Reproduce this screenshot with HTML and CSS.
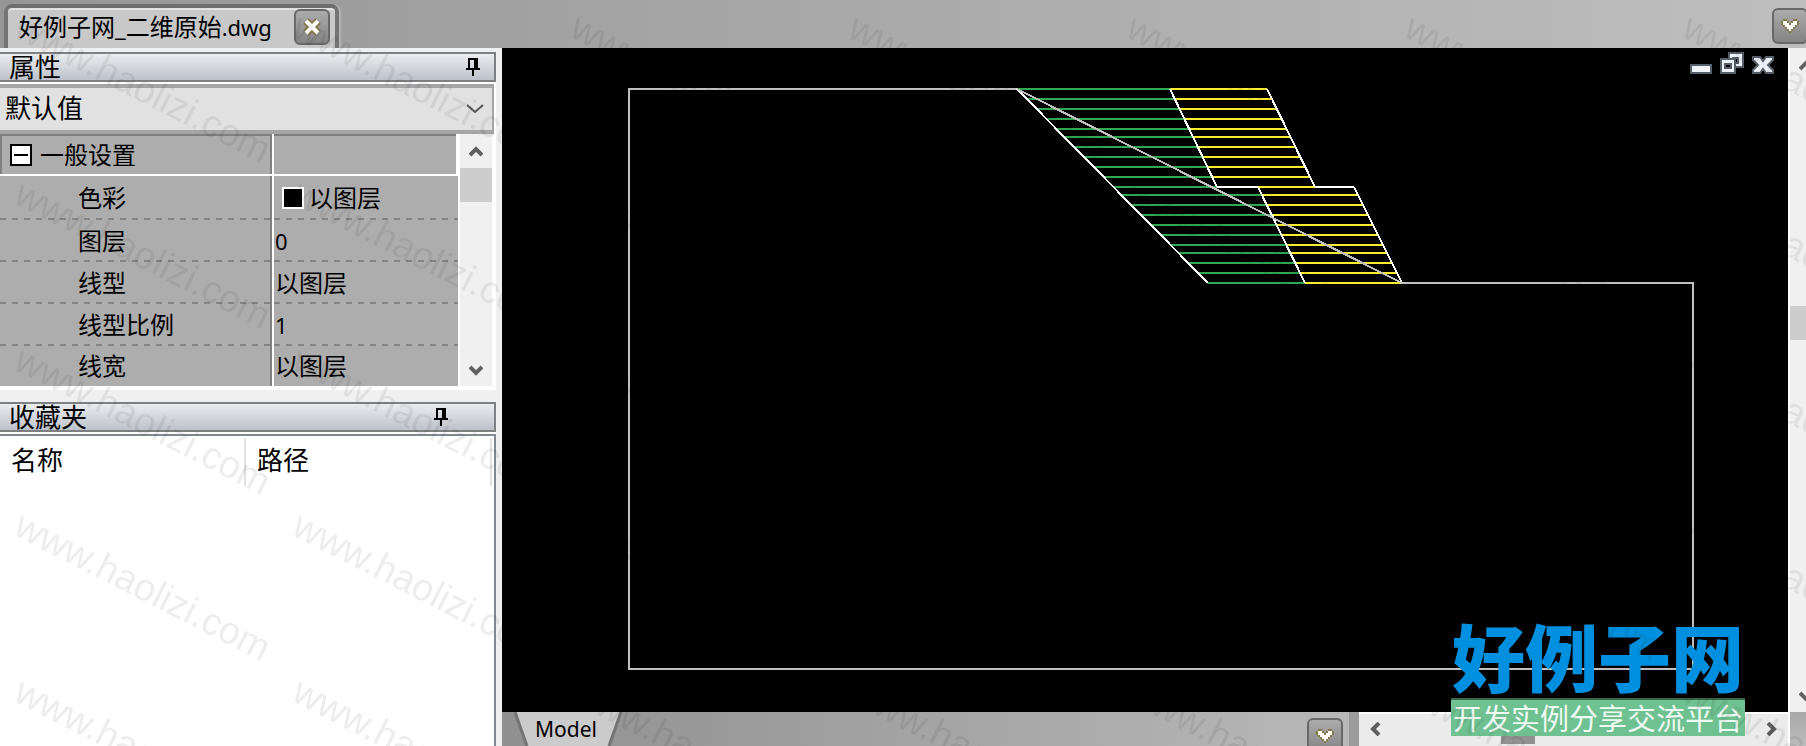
FILE: index.html
```html
<!DOCTYPE html>
<html lang="zh-CN">
<head>
<meta charset="utf-8">
<title>好例子网_二维原始.dwg</title>
<link rel="stylesheet" href="styles.css">
</head>
<body>
<div class="app">
  <header class="tabbar">
    <div class="tab">
      <span class="tab-title">好例子网_二维原始<span class="latin">.dwg</span></span>
      <button class="btn" type="button" aria-label="关闭">
        <svg width="20" height="18" viewBox="0 0 20 18"><path d="M4 3l12 12M16 3L4 15" stroke="#85794a" stroke-width="8"/><path d="M4 3l12 12M16 3L4 15" stroke="#fff" stroke-width="4"/></svg>
      </button>
    </div>
    <button class="btn btn-edge" type="button" aria-label="标签列表">
      <svg width="20" height="16" viewBox="0 0 20 16"><path d="M1 3h2V1h4v2h2v2h2V3h2V1h4v2h2v4h-2v2h-2v2h-2v2h-2v2H9v-2H7v-2H5V9H3V7H1z" fill="#85794a"/><path d="M3 3h4v2h2v2h2V5h2V3h4v4h-2v2h-2v2h-2v2H9v-2H7V9H5V7H3z" fill="#fff"/></svg>
    </button>
  </header>

  <aside class="side">
    <section class="panel">
      <h2 class="panel-head">属性
        <button class="pin" type="button" aria-label="固定属性面板"><svg width="14" height="18" viewBox="0 0 14 18"><path d="M2 0h10v10h2v2H8v6H6v-6H0v-2h2zM4 2v8h4V2z" fill="#000" fill-rule="evenodd"/></svg></button>
      </h2>
      <div class="combo">
        <select class="combo-select" aria-label="选择对象"><option>默认值</option></select>
        <svg class="combo-arrow" width="18" height="12" viewBox="0 0 18 12"><path d="M1 2l8 7 8-7" fill="none" stroke="#555" stroke-width="2"/></svg>
      </div>
      <div class="props">
        <table class="grid">
          <thead>
            <tr><th class="group" scope="col"><div class="group-label"><button class="fold" type="button" aria-label="折叠"></button>一般设置</div></th><td></td></tr>
          </thead>
          <tbody>
            <tr><th scope="row">色彩</th><td><div class="color"><span class="swatch"></span>以图层</div></td></tr>
            <tr><th scope="row">图层</th><td class="latin">0</td></tr>
            <tr><th scope="row">线型</th><td>以图层</td></tr>
            <tr><th scope="row">线型比例</th><td class="latin">1</td></tr>
            <tr><th scope="row">线宽</th><td>以图层</td></tr>
          </tbody>
        </table>
        <div class="vscroll">
          <button class="arrow" type="button" aria-label="向上"><svg width="14" height="12" viewBox="0 0 14 12"><path d="M1 10l6-6 6 6" fill="none" stroke="#606060" stroke-width="4"/></svg></button>
          <div class="thumb"></div>
          <button class="arrow arrow-end" type="button" aria-label="向下"><svg width="14" height="12" viewBox="0 0 14 12"><path d="M1 2l6 6 6-6" fill="none" stroke="#606060" stroke-width="4"/></svg></button>
        </div>
      </div>
    </section>
    <section class="panel panel-fill">
      <h2 class="panel-head panel-head-wide">收藏夹
        <button class="pin" type="button" aria-label="固定收藏夹面板"><svg width="14" height="18" viewBox="0 0 14 18"><path d="M2 0h10v10h2v2H8v6H6v-6H0v-2h2zM4 2v8h4V2z" fill="#000" fill-rule="evenodd"/></svg></button>
      </h2>
      <div class="list">
        <table class="list-table"><thead><tr><th scope="col">名称</th><th scope="col">路径</th></tr></thead></table>
      </div>
    </section>
  </aside>

  <main class="drawing">
    <svg class="model" viewBox="502 48 1286 664" role="img" aria-label="二维图形">
      <defs>
        <path id="rows" d="M1000 89h420M1000 99h420M1000 109h420M1000 119h420M1000 129h420M1000 137h420M1000 147h420M1000 157h420M1000 167h420M1000 177h420M1000 187h420M1000 195h420M1000 205h420M1000 215h420M1000 225h420M1000 235h420M1000 245h420M1000 253h420M1000 263h420M1000 273h420M1000 283h420" stroke-width="2"/>
        <clipPath id="left"><path d="M1017 88H1170L1217 186H1258L1305 284H1208z"/></clipPath>
        <clipPath id="right"><path d="M1170 88H1267L1315 188H1217zM1258 186H1354L1402 284H1305z"/></clipPath>
      </defs>
      <g shape-rendering="crispEdges" fill="none" stroke-width="2">
        <path d="M1017 89H629V669H1693V283H1402" stroke="#c0c0c0"/>
        <g clip-path="url(#left)"><use href="#rows" stroke="#2fa84f"/></g>
        <g clip-path="url(#right)"><use href="#rows" stroke="#fbec32"/></g>
        <path d="M1217 187H1258M1315 187H1354" stroke="#fff"/>
        <path d="M1017 89L1208 283M1170 89L1217 187M1267 89L1315 187M1258 187L1305 283M1354 187L1402 283" stroke="#fff"/>
        <path d="M1017 89L1402 283" stroke="#c0c0c0"/>
      </g>
    </svg>
    <div class="winctl">
      <button type="button" aria-label="最小化"><svg width="22" height="22" viewBox="0 0 22 22"><path d="M1 13h20v8H1z" fill="#f0f4f8" stroke="#56606a" stroke-width="2"/></svg></button>
      <button type="button" aria-label="还原"><svg width="24" height="22" viewBox="0 0 24 22"><path d="M9 1h14v14h-8v-4h3V6h-5v3H9z" fill="#eef3f9" stroke="#56606a" stroke-width="2"/><path d="M1 7h14v14H1z" fill="#eef3f9" stroke="#56606a" stroke-width="2"/><path d="M5 12h6v4H5z" fill="#000" stroke="#56606a" stroke-width="2"/></svg></button>
      <button type="button" aria-label="关闭图形"><svg width="22" height="18" viewBox="0 0 22 18"><path d="M1 1h7l3 4 3-4h7v3l-5 5 5 5v3h-7l-3-4-3 4H1v-3l5-5-5-5z" fill="#eef3f9" stroke="#56606a" stroke-width="2"/></svg></button>
    </div>
  </main>

  <div class="vscroll vscroll-main">
    <button class="arrow" type="button" aria-label="向上滚动"><svg width="14" height="12" viewBox="0 0 14 12"><path d="M1 10l6-6 6 6" fill="none" stroke="#606060" stroke-width="4"/></svg></button>
    <div class="thumb"></div>
    <button class="arrow arrow-end" type="button" aria-label="向下滚动"><svg width="14" height="12" viewBox="0 0 14 12"><path d="M1 2l6 6 6-6" fill="none" stroke="#606060" stroke-width="4"/></svg></button>
  </div>

  <footer class="bottom">
    <div class="layouts">
      <button class="layout-tab" type="button">
        <svg class="layout-shape" width="108" height="34" viewBox="0 0 108 34"><path d="M1 0L13 34H95L107 0z" fill="#cbcbcb"/><path d="M1 0L13 34M95 34L107 0" stroke="#747474" stroke-width="3"/></svg>
        <span class="layout-name">Model</span>
      </button>
      <button class="btn btn-low" type="button" aria-label="布局列表">
        <svg width="20" height="16" viewBox="0 0 20 16"><path d="M1 3h2V1h4v2h2v2h2V3h2V1h4v2h2v4h-2v2h-2v2h-2v2h-2v2H9v-2H7v-2H5V9H3V7H1z" fill="#85794a"/><path d="M3 3h4v2h2v2h2V5h2V3h4v4h-2v2h-2v2h-2v2H9v-2H7V9H5V7H3z" fill="#fff"/></svg>
      </button>
    </div>
    <div class="hscroll">
      <button class="harrow" type="button" aria-label="向左滚动"><svg width="12" height="14" viewBox="0 0 12 14"><path d="M10 1L4 7l6 6" fill="none" stroke="#606060" stroke-width="4"/></svg></button>
      <div class="htrack"><div class="hthumb"></div></div>
      <button class="harrow" type="button" aria-label="向右滚动"><svg width="12" height="14" viewBox="0 0 12 14"><path d="M2 1l6 6-6 6" fill="none" stroke="#606060" stroke-width="4"/></svg></button>
    </div>
    <div class="corner"></div>
  </footer>
</div>

<div class="brand">
  <div class="brand-name">好例子网</div>
  <div class="brand-line">开发实例分享交流平台</div>
</div>
<svg class="watermark" aria-hidden="true">
  <defs><pattern id="mark" x="8" y="8" width="278" height="166" patternUnits="userSpaceOnUse"><text class="mark-text" transform="translate(4 28) rotate(27)">www.haolizi.com</text></pattern></defs>
  <rect width="100%" height="100%" fill="url(#mark)"/>
</svg>
</body>
</html>
```
FILE: styles.css
```css
* { box-sizing: border-box; }

body {
  margin: 0;
  overflow: hidden;
  background: #f0f0f0;
  color: #000;
  font-family: "Noto Sans", "Noto Sans CJK SC", sans-serif;
  font-size: 24px;
  line-height: 32px;
}

button, select { margin: 0; padding: 0; border: 0; background: none; color: inherit; font: inherit; }
svg { display: block; flex: none; }
.latin { font-size: 22px; }

.app {
  display: grid;
  grid-template: 48px minmax(0, 1fr) 34px / 502px minmax(0, 1fr) 18px;
  height: 100vh;
}

/* document tabs */
.tabbar {
  grid-column: 1 / -1;
  display: flex;
  align-items: flex-end;
  justify-content: space-between;
  overflow: hidden;
  background: linear-gradient(90deg, #969696, #bebebe);
}
.tab {
  display: flex;
  align-items: center;
  gap: 22px;
  height: 44px;
  margin-left: 4px;
  padding: 0 5px 2px 11px;
  border: 4px solid #747474;
  border-top-color: #6e6e6e;
  border-bottom: 0;
  border-radius: 8px 8px 0 0;
  background: #c8c8c8;
  box-shadow: inset 0 2px #e2e2e2, 2px 0 #b4b4b4;
}
.tab-title { white-space: nowrap; }
.btn {
  display: flex;
  flex: none;
  align-items: center;
  justify-content: center;
  width: 36px;
  height: 36px;
  border: 2px solid #686868;
  border-radius: 6px;
  background: linear-gradient(#ababab, #848484);
}
.btn-edge { margin: 0 -2px 4px 0; }

/* side panels */
.side {
  grid-row: 2 / 4;
  display: flex;
  flex-direction: column;
  gap: 12px;
  min-height: 0;
  padding: 4px 6px 0 0;
}
.panel { background: #fff; }
.panel-fill { display: flex; flex: 1; flex-direction: column; min-height: 0; }
.panel-head {
  display: flex;
  flex: none;
  align-items: center;
  justify-content: space-between;
  height: 30px;
  margin: 0 0 2px;
  padding: 0 14px 0 9px;
  border: solid #7d7f82;
  border-width: 2px 2px 2px 0;
  background: linear-gradient(#eaecee, #bdc2cb);
  font-size: 26px;
  font-weight: 400;
  line-height: 26px;
}
.panel-head-wide { padding-right: 46px; }

.combo {
  position: relative;
  height: 50px;
  margin-right: 2px;
  border: solid #a5a5a5;
  border-width: 4px 2px 4px 0;
  background: #e1e1e1;
}
.combo-select { width: 100%; height: 42px; padding: 0 0 2px 5px; font-size: 26px; line-height: 40px; appearance: none; }
.combo-arrow { position: absolute; right: 8px; top: 15px; pointer-events: none; }

.props { display: flex; gap: 2px; padding: 0 4px 4px 0; }
.grid { flex: 1; border-spacing: 0; table-layout: fixed; }
.grid th, .grid td { height: 42px; padding: 0; background: #adadad; font-weight: 400; text-align: left; }
.grid th { width: 274px; padding-left: 78px; border-right: 2px solid #fff; box-shadow: inset -2px 0 #808080; }
.grid td { padding-left: 1px; }
.grid thead th, .grid thead td { padding-top: 2px; border-bottom: 2px solid #fff; }
.grid thead th { padding-left: 10px; box-shadow: inset -2px 0 #808080, inset 2px 2px #808080; }
.grid thead td { border-right: 2px solid #fff; box-shadow: inset 0 2px #808080; }
.grid tbody tr:first-child > * { height: 44px; }
.grid tbody tr:last-child > * { height: 40px; }
.grid tbody tr:not(:last-child) > * {
  background: repeating-linear-gradient(90deg, #848484 0 6px, #adadad 6px 12px) 0 100% / 100% 2px no-repeat #adadad;
}
.group-label { display: flex; align-items: center; gap: 8px; }
.fold {
  width: 22px;
  height: 22px;
  border: 2px solid #000;
  background: linear-gradient(#000, #000) center / 14px 2px no-repeat #fff;
}
.color { display: flex; align-items: center; gap: 5px; padding-left: 7px; }
.swatch { width: 22px; height: 22px; border: 2px solid #fff; background: #000; }

.vscroll { display: flex; flex: none; flex-direction: column; align-items: center; width: 32px; background: #f0f0f0; }
.arrow { display: flex; flex: none; align-items: center; justify-content: center; width: 32px; height: 34px; }
.arrow-end { margin-top: auto; height: 30px; }
.thumb { flex: none; width: 32px; height: 34px; background: #cdcdcd; }

.list { flex: 1; border: solid #828790; border-width: 2px 2px 0 0; background: #fff; }
.list-table { width: 492px; margin-top: 2px; border-spacing: 0; table-layout: fixed; }
.list-table th { width: 246px; height: 48px; padding: 0 0 4px 11px; border-right: 2px solid #e2e2e2; font-size: 26px; font-weight: 400; line-height: 32px; text-align: left; }

/* drawing area */
.drawing { position: relative; overflow: hidden; background: #000; }
.model { width: 100%; height: 100%; }
.winctl { position: absolute; top: 4px; right: 14px; display: flex; align-items: flex-end; gap: 8px; }

.vscroll-main { width: 18px; align-items: flex-start; overflow: hidden; border-left: 2px solid #fff; }
.vscroll-main .thumb { margin-top: 224px; }

.bottom { grid-column: 2 / 4; display: grid; grid-template-columns: 2fr 1fr 18px; overflow: hidden; }
.layouts {
  display: flex;
  align-items: flex-start;
  justify-content: space-between;
  padding: 0 6px 0 12px;
  border-right: 10px solid #9c9c9c;
  background: linear-gradient(90deg, #909090, #b8b8b8);
}
.layout-tab { position: relative; width: 108px; height: 34px; padding-right: 4px; }
.layout-shape { position: absolute; inset: 0; }
.layout-name { position: relative; display: block; font-size: 21px; line-height: 30px; }
.btn-low { margin: 6px 0 0; }
.hscroll { display: flex; border-top: 2px solid #fff; background: #ebebeb; }
.harrow { display: flex; align-items: center; justify-content: center; width: 32px; height: 30px; }
.htrack { flex: 1; }
.hthumb { width: 34px; height: 30px; margin-left: 30%; background: #919191; }
.corner { border-left: 2px solid #fff; background: linear-gradient(#a8a8a8, #c0c0c0); }

/* site mark lying over the drawing */
.brand { position: absolute; right: 61px; bottom: 10px; text-align: center; white-space: nowrap; font-family: "Noto Sans CJK SC", sans-serif; }
.brand-name { color: #0090df; font-size: 73px; font-weight: 900; line-height: 88px; }
.brand-line { padding: 0 2px; border-top: 2px solid #35664a; background: #6fc191; color: #eefaf2; font-size: 29px; line-height: 34px; padding-bottom: 2px; }

.watermark { position: absolute; inset: 0; width: 100%; height: 100%; pointer-events: none; }
.mark-text { fill: #000; fill-opacity: 0.07; font-family: "Liberation Sans", Arial, sans-serif; font-size: 38px; }
```
